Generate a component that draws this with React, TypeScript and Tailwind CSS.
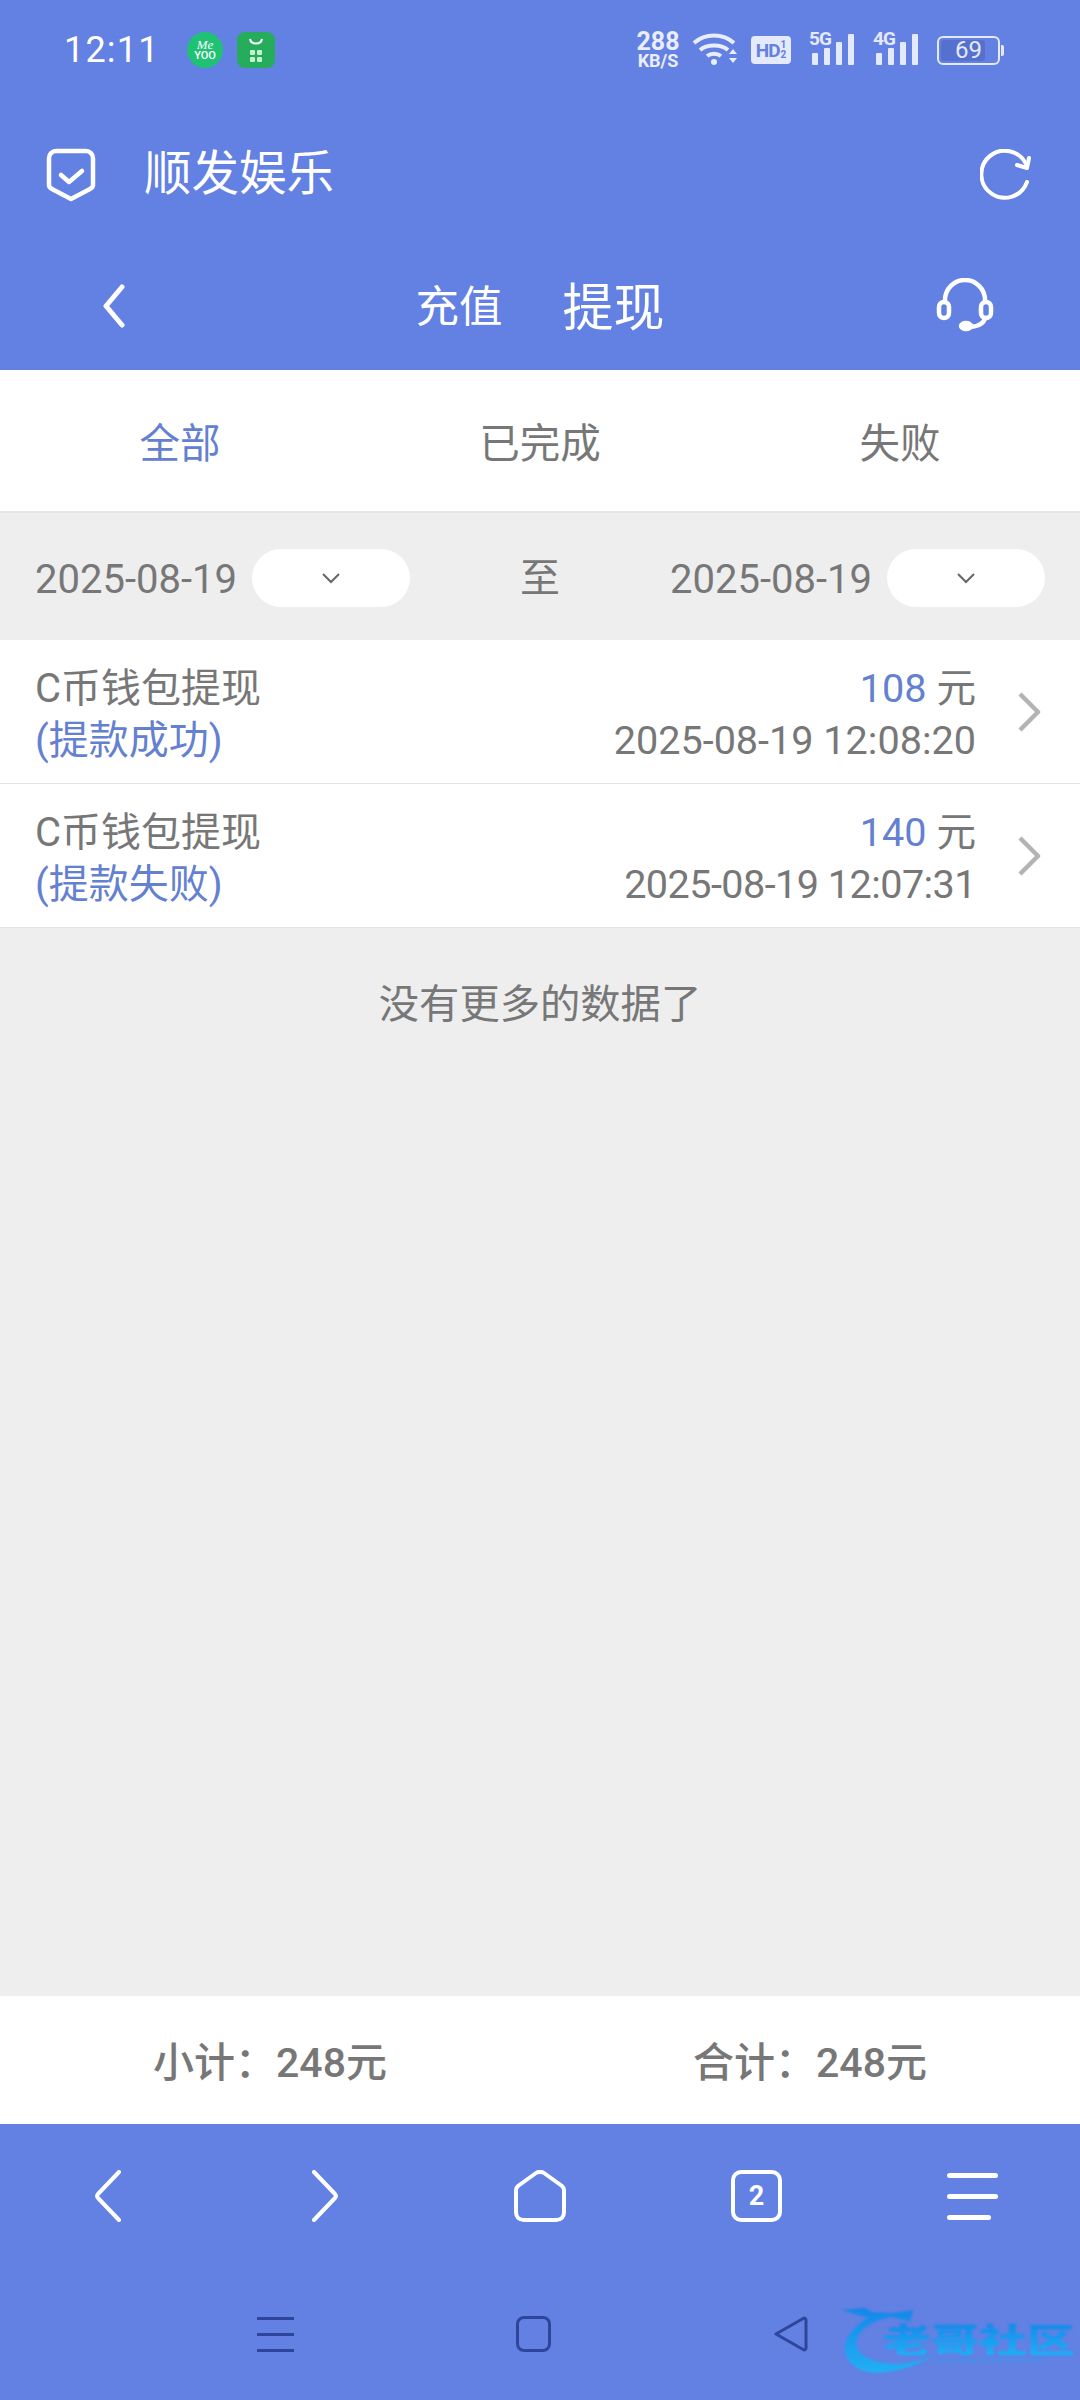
import React from 'react';

const cjk = "font-['Roboto','Noto_Sans_CJK_SC',sans-serif]";

const records = [
  { status: '(提款成功)', amount: '108', time: '2025-08-19 12:08:20', timeClass: 'text-[39.6px]' },
  { status: '(提款失败)', amount: '140', time: '2025-08-19 12:07:31', timeClass: 'text-[39.6px] tracking-[-0.55px]' },
];

function Bars({ label }: { label: string }) {
  return (
    <div className="relative w-[48px] h-[34px]">
      <svg width="48" height="34" viewBox="0 0 48 34" className="absolute left-0 top-0" fill="#e4e9fb">
        <rect x="3" y="20" width="6" height="12" rx="1" />
        <rect x="15" y="15" width="6" height="17" rx="1" />
        <rect x="27" y="9" width="6" height="23" rx="1" />
        <rect x="39" y="1" width="6" height="31" rx="1" />
      </svg>
      <span className="absolute left-0 top-[-3px] text-[19px] leading-[18px] font-bold text-[#e4e9fb] tracking-[-1px] bg-[#6380e3]">{label}</span>
    </div>
  );
}

function StatusBar() {
  return (
    <div className="flex items-center h-[100px] pl-[64px] pr-[76px] text-white">
      <span className="text-[36px] tracking-[1.2px] leading-none w-[123px]">12:11</span>
      <div className="w-[36px] h-[36px] rounded-full bg-[#1fc274] flex flex-col items-center justify-center text-white leading-none">
        <span className="text-[13px] italic font-['Liberation_Serif',serif] leading-[10px]">Me</span>
        <span className="text-[11px] leading-[11px] font-medium">YOO</span>
      </div>
      <div className="ml-[14px] w-[38px] h-[36px] rounded-[8px] bg-[#26ad5b] flex flex-col items-center pt-[6px]">
        <svg width="16" height="8" viewBox="0 0 16 8" fill="none" stroke="#fff" strokeWidth="2"><path d="M2 1c1 6 11 6 12 0" /></svg>
        <div className="grid grid-cols-2 gap-[2px] mt-[4px]">
          <span className="w-[5px] h-[5px] bg-[#c5f2d2] rounded-[1px]" />
          <span className="w-[5px] h-[5px] bg-[#c5f2d2] rounded-[1px]" />
          <span className="w-[5px] h-[5px] bg-[#c5f2d2] rounded-[1px]" />
          <span className="w-[5px] h-[5px] bg-[#c5f2d2] rounded-[1px]" />
        </div>
      </div>
      <div className="ml-auto flex items-center text-[#e9edfc]">
        <div className="flex flex-col items-center w-[46px] font-bold leading-none">
          <span className="text-[25px] leading-[21px]">288</span>
          <span className="text-[18px] leading-[17px]">KB/S</span>
        </div>
        <svg width="46" height="36" viewBox="0 0 46 36" className="ml-[11px]" fill="none" stroke="#e9edfc">
          <path d="M2 11C13 1 31 1 42 11" strokeWidth="4" />
          <path d="M8 18c7-6 21-6 28 0" strokeWidth="4" />
          <path d="M15 24c4-3 10-3 14 0" strokeWidth="4" />
          <circle cx="22" cy="30" r="3" fill="#e9edfc" stroke="none" />
          <path d="M37 22h8l-4-5zM37 26h8l-4 5z" fill="#e9edfc" stroke="none" />
        </svg>
        <div className="ml-[13px] w-[40px] h-[28px] rounded-[4px] bg-[#e4e9fb] text-[#6380e3] flex items-center justify-center font-bold leading-none">
          <span className="text-[19px] tracking-[-1px]">HD</span>
          <span className="flex flex-col text-[10px] leading-[10px] ml-[1px]"><span>1</span><span>2</span></span>
        </div>
        <div className="ml-[18px]"><Bars label="5G" /></div>
        <div className="ml-[16px]"><Bars label="4G" /></div>
        <div className="ml-[16px] flex items-center">
          <div className="w-[63px] h-[29px] rounded-[6px] border-2 border-[#e4e9fb] p-[2px] relative">
            <div className="h-full w-[44px] rounded-[3px] bg-[#5670cf]" />
            <span className="absolute inset-0 flex items-center justify-center text-[24px] leading-none text-[#e4e9fb]">69</span>
          </div>
          <div className="ml-[1px] w-[3px] h-[11px] rounded-r-[2px] bg-[#e4e9fb]" />
        </div>
      </div>
    </div>
  );
}

function Header() {
  return (
    <header className="bg-[#6380e3] h-[370px] text-white">
      <StatusBar />
      <div className="flex items-center h-[144px] pt-[5px] pl-[46px] pr-[48px]">
        <svg width="50" height="54" viewBox="0 0 50 54" fill="none" stroke="#fff" strokeWidth="4.5" strokeLinejoin="round" strokeLinecap="round">
          <path d="M10 3h30a7 7 0 0 1 7 7v27c0 2-1 3-3 4L25 51 6 41c-2-1-3-2-3-4V10a7 7 0 0 1 7-7z" />
          <path d="M15 27l8 7 13-11" />
        </svg>
        <span className="ml-[48px] text-[47.5px] leading-none pt-[1px]">顺发娱乐</span>
        <svg className="ml-auto" width="52" height="52" viewBox="0 0 52 52" fill="none" stroke="#fff" strokeWidth="4" strokeLinecap="round" strokeLinejoin="round">
          <path d="M47 33A23.5 23.5 0 1 1 46 15" />
          <path d="M49 9l-2 10-10-3" />
        </svg>
      </div>
      <div className="relative flex items-center justify-center h-[126px]">
        <svg className="absolute left-[102px] top-[40px]" width="24" height="44" viewBox="0 0 24 44" fill="none" stroke="#fff" strokeWidth="5" strokeLinecap="round" strokeLinejoin="round">
          <path d="M20 3L4 22l16 19" />
        </svg>
        <span className="text-[43.5px] leading-none mr-[60px] pt-[2px]">充值</span>
        <span className="text-[51px] leading-none pt-[2px]">提现</span>
        <svg className="absolute left-[936px] top-[34px]" width="58" height="54" viewBox="0 0 58 54" fill="none" stroke="#fff" strokeWidth="4.5" strokeLinecap="round">
          <path d="M9 24v-2a20 20 0 0 1 40 0v2" />
          <rect x="3" y="24" width="10" height="16" rx="5" />
          <rect x="45" y="24" width="10" height="16" rx="5" />
          <path d="M49 40c-1 6-6 8-14 9" />
          <ellipse cx="30" cy="48" rx="5" ry="3" fill="#fff" />
        </svg>
      </div>
    </header>
  );
}

function DateField() {
  return (
    <div className="flex items-center">
      <span className="text-[40px] leading-none text-[#777777] whitespace-nowrap pt-[4px]">2025-08-19</span>
      <div className="ml-[15px] w-[158px] h-[58px] rounded-full bg-white flex items-center justify-center">
        <svg width="20" height="12" viewBox="0 0 20 12" fill="none" stroke="#666" strokeWidth="2"><path d="M2 2l8 8 8-8" /></svg>
      </div>
    </div>
  );
}

function RecordRow({ status, amount, time, timeClass }: { status: string; amount: string; time: string; timeClass: string }) {
  return (
    <div className="flex items-center h-[144px] bg-white border-b border-[#e3e3e3] pl-[35px] pr-[39px]">
      <div className="leading-[52px] text-[40px] pt-[7px]">
        <div className="text-[#777777]">C币钱包提现</div>
        <div className="text-[#6480d0]">{status}</div>
      </div>
      <div className="ml-auto text-right leading-[52px] pt-[7px]">
        <div className="text-[39.6px]">
          <span className="text-[#6480d0]">{amount}</span>
          <span className="text-[#777777]"> 元</span>
        </div>
        <div className={`text-[#777777] ${timeClass}`}>{time}</div>
      </div>
      <svg className="ml-[41px]" width="24" height="40" viewBox="0 0 24 40" fill="none" stroke="#b3b3b3" strokeWidth="4.5" strokeLinejoin="round">
        <path d="M3 2l18 18L3 38" />
      </svg>
    </div>
  );
}

function Watermark() {
  return (
    <div className="absolute left-[825px] top-[27px] w-[255px] h-[85px] overflow-hidden blur-[1px]">
      <svg className="absolute left-0 top-0" width="230" height="85" viewBox="0 0 690 255">
        <defs>
          <linearGradient id="swoosh" x1="0" y1="0" x2="0" y2="1">
            <stop offset="0" stopColor="#1487e8" />
            <stop offset="1" stopColor="#22b0f5" />
          </linearGradient>
        </defs>
        <path
          fill="url(#swoosh)"
          d="M50 45L120 38L140 50L200 55L265 45L255 80L200 65L165 75C130 85 100 110 95 140C90 175 130 200 190 205C240 210 290 195 330 180C290 205 240 225 180 232C120 240 65 215 60 165C55 130 90 90 130 68L90 58Z"
        />
        <path stroke="#2a9df0" strokeWidth="8" strokeDasharray="10 9" d="M330 198H660" />
      </svg>
      <span className="absolute left-[58px] top-[26px] text-[48px] leading-[48px] font-black whitespace-nowrap origin-top scale-y-[0.72] text-transparent bg-clip-text bg-gradient-to-b from-[#1487e8] to-[#1fb0f7] font-['Noto_Sans_CJK_SC',sans-serif]">老哥社区</span>
    </div>
  );
}

function BottomNav() {
  return (
    <nav className="bg-[#6380e3] h-[276px]">
      <div className="flex items-center h-[144px]">
        <svg className="ml-[95px]" width="26" height="52" viewBox="0 0 26 52" fill="none" stroke="#fff" strokeWidth="4" strokeLinecap="round" strokeLinejoin="round">
          <path d="M24 2L3 24a3 3 0 0 0 0 4l21 22" />
        </svg>
        <svg className="ml-[191px]" width="26" height="52" viewBox="0 0 26 52" fill="none" stroke="#fff" strokeWidth="4" strokeLinecap="round" strokeLinejoin="round">
          <path d="M2 2l21 22a3 3 0 0 1 0 4L2 50" />
        </svg>
        <svg className="ml-[176px]" width="52" height="52" viewBox="0 0 52 52" fill="none" stroke="#fff" strokeWidth="4" strokeLinejoin="round">
          <path d="M2 20c0-2 1-3 2-4L22 3c2-1.5 6-1.5 8 0l18 13c1 1 2 2 2 4v22c0 5-3 8-8 8H10c-5 0-8-3-8-8z" />
        </svg>
        <div className="ml-[165px] w-[51px] h-[52px] rounded-[10px] border-4 border-white flex items-center justify-center text-white text-[27px] font-bold leading-none">2</div>
        <div className="ml-[165px] flex flex-col gap-[16px] w-[51px]">
          <span className="h-[5px] rounded-full bg-white" />
          <span className="h-[5px] rounded-full bg-white" />
          <span className="h-[5px] w-[44px] rounded-full bg-white" />
        </div>
      </div>
      <div className="relative flex items-center h-[132px]">
        <div className="ml-[257px] flex flex-col gap-[13px] w-[37px]">
          <span className="h-[3px] bg-[#2e459e]" />
          <span className="h-[3px] bg-[#2e459e]" />
          <span className="h-[3px] bg-[#2e459e]" />
        </div>
        <div className="ml-[222px] w-[35px] h-[36px] rounded-[8px] border-[3px] border-[#2e459e]" />
        <svg className="ml-[223px]" width="34" height="36" viewBox="0 0 34 36" fill="none" stroke="#2e459e" strokeWidth="3" strokeLinejoin="round">
          <path d="M2 18L30 2c1 0 2 1 2 2v28c0 1-1 2-2 2z" />
        </svg>
        <Watermark />
      </div>
    </nav>
  );
}

export default function App() {
  return (
    <div className={`w-[1080px] h-[2400px] flex flex-col bg-[#eeeeee] overflow-hidden ${cjk}`}>
      <Header />
      <div className="flex items-center h-[143px] pt-[7px] bg-white border-b-2 border-[#e6e6e6] text-[40.5px] leading-none">
        <div className="w-[360px] text-center text-[#6480d0]">全部</div>
        <div className="w-[360px] text-center text-[#777777]">已完成</div>
        <div className="w-[360px] text-center text-[#777777]">失败</div>
      </div>
      <div className="grid grid-cols-[1fr_80px_1fr] items-center h-[127px] pt-[2px]">
        <div className="pl-[35px]"><DateField /></div>
        <div className="text-center text-[40px] leading-none text-[#777777] pt-[2px]">至</div>
        <div className="flex justify-end pr-[35px]"><DateField /></div>
      </div>
      {records.map((record) => (
        <RecordRow key={record.time} {...record} />
      ))}
      <div className="flex-1">
        <div className="pt-[57px] text-center text-[40.3px] leading-none text-[#777777]">没有更多的数据了</div>
      </div>
      <div className="grid grid-cols-2 items-center h-[128px] pt-[7px] bg-white text-[41px] font-medium leading-none text-[#777777] text-center">
        <div>小计：248元</div>
        <div>合计：248元</div>
      </div>
      <BottomNav />
    </div>
  );
}
